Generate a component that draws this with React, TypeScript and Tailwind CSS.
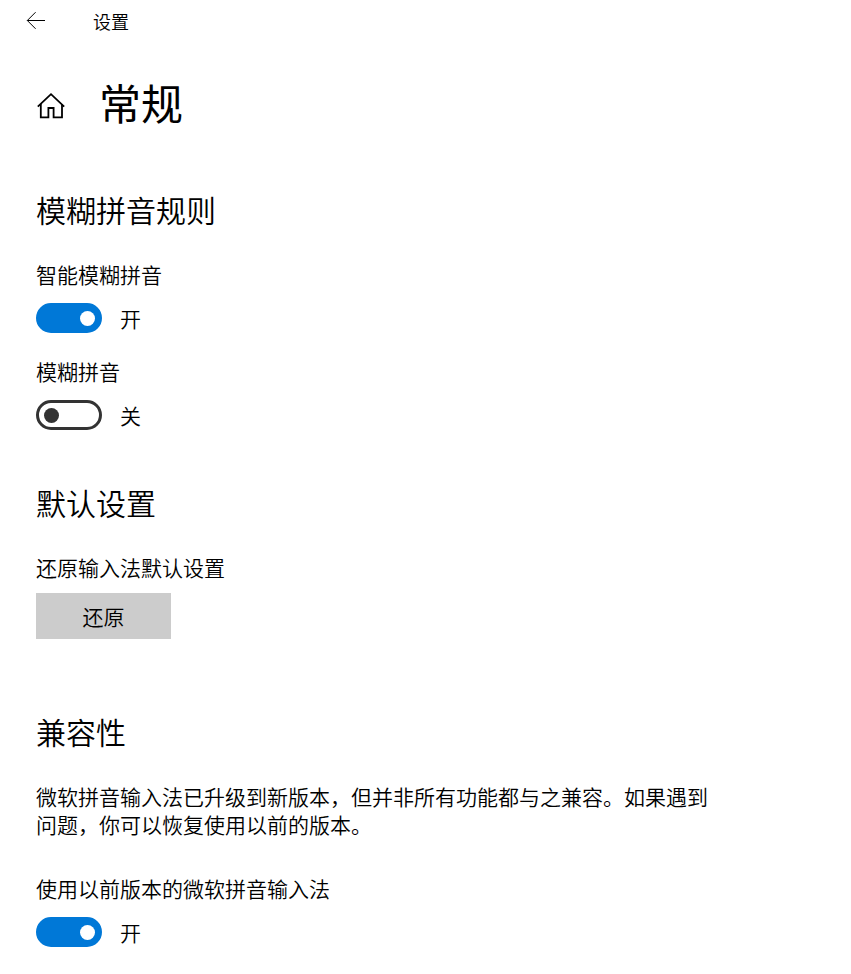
import React, { useState } from 'react';

// ================= Icons =================
const BackIcon: React.FC = () => (
  <svg width="20" height="20" viewBox="0 0 20 20" fill="none" stroke="currentColor" strokeWidth="1">
    <path d="M1.3 9.5H19M9.6 1.2L1.3 9.5L9.6 17.8" />
  </svg>
);

const HomeIcon: React.FC = () => (
  <svg width="30" height="34" viewBox="0 0 30 34" fill="none" stroke="currentColor" strokeWidth="1.8">
    <path d="M1.8 21.7L15 9.2L28.2 21.7" />
    <path d="M4.8 19V32.3H12.4V23H17.6V32.3H26V19" />
  </svg>
);

// ================= Toggle =================
interface ToggleProps {
  id: string;
  label: string;
  defaultOn: boolean;
}

const Toggle: React.FC<ToggleProps> = ({ id, label, defaultOn }) => {
  const [on, setOn] = useState(defaultOn);
  return (
    <div>
      <label htmlFor={id} className="block">{label}</label>
      <div className="mt-[15px] flex items-center gap-[18px]">
        <input
          id={id}
          type="checkbox"
          checked={on}
          onChange={(e) => setOn(e.target.checked)}
          className="flex h-[30px] w-[66px] shrink-0 cursor-pointer appearance-none items-center rounded-full border-[3px] border-[#333333] bg-white pr-1 pl-[5px] before:block before:size-[15px] before:rounded-full before:bg-[#333333] checked:justify-end checked:border-[#0078d7] checked:bg-[#0078d7] checked:before:bg-white"
        />
        <span>{on ? '开' : '关'}</span>
      </div>
    </div>
  );
};

// ================= Section =================
const Section: React.FC<{ title: string; children: React.ReactNode }> = ({ title, children }) => (
  <section>
    <h2 className="text-[30px] leading-[40px]">{title}</h2>
    {children}
  </section>
);

// ================= Main Component =================
export default function App() {
  return (
    <div className="min-h-screen bg-white pb-6 font-['Noto_Sans_CJK_SC',sans-serif] text-[21px] leading-[28px] font-[350] text-black">
      <header className="flex h-[42px] items-center gap-[47px] pl-[26px]">
        <button type="button" aria-label="返回">
          <BackIcon />
        </button>
        <span className="text-lg">设置</span>
      </header>

      <main className="px-9">
        <div className="mt-[30px] flex items-center gap-[33px]">
          <a href="#home" aria-label="主页">
            <HomeIcon />
          </a>
          <h1 className="text-[42px] leading-[60px] font-normal">常规</h1>
        </div>

        <div className="mt-[57px] flex flex-col gap-[52px]">
          <Section title="模糊拼音规则">
            <div className="mt-[31px] flex flex-col gap-6">
              <Toggle id="smart-fuzzy" label="智能模糊拼音" defaultOn />
              <Toggle id="fuzzy" label="模糊拼音" defaultOn={false} />
            </div>
          </Section>

          <Section title="默认设置">
            <p className="mt-[31px]">还原输入法默认设置</p>
            <button type="button" className="mt-3 mb-5 h-[46px] w-[135px] bg-[#cccccc] hover:bg-[#bbbbbb]">
              还原
            </button>
          </Section>

          <Section title="兼容性">
            <p className="mt-[31px] mb-9 max-w-[680px]">
              微软拼音输入法已升级到新版本，但并非所有功能都与之兼容。如果遇到问题，你可以恢复使用以前的版本。
            </p>
            <Toggle id="previous-version" label="使用以前版本的微软拼音输入法" defaultOn />
          </Section>
        </div>
      </main>
    </div>
  );
}
